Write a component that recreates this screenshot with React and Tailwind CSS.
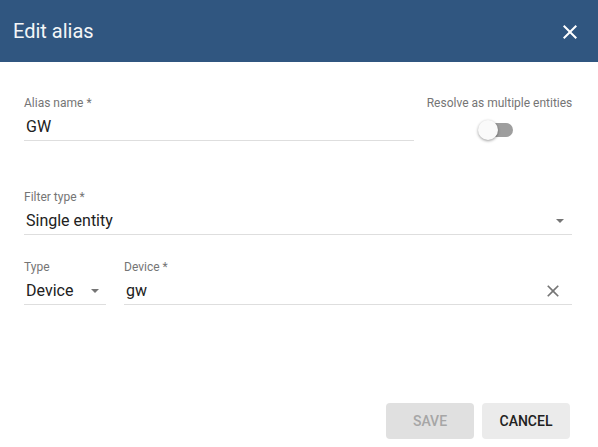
import React from "react";

const font = { fontFamily: "Roboto, 'Liberation Sans', sans-serif" };

function Arrow() {
  return (
    <span className="block w-0 h-0 border-l-[4px] border-r-[4px] border-t-[4px] border-l-transparent border-r-transparent border-t-[#757575]" />
  );
}

function Field({ label, value, right, className = "" }) {
  return (
    <div className={"flex flex-col " + className}>
      <div className="text-[12px] leading-[14px] h-[14px] text-[#757575] whitespace-nowrap">{label}</div>
      <div className="mt-[7px] flex items-center h-[20px] border-b border-[#dedede] box-content pb-[3px]">
        <div className="flex-1 pl-[2px] text-[16px] leading-[20px] text-[#212121] whitespace-nowrap">{value}</div>
        {right}
      </div>
    </div>
  );
}

export default function App() {
  return (
    <div className="w-[598px] h-[447px] bg-white flex flex-col overflow-hidden" style={font}>
      <div className="h-[62px] bg-[#305680] flex items-center justify-between pl-[13px] pr-[16px] shrink-0">
        <div className="text-[20px] leading-[24px] text-[#f4f6f8]">Edit alias</div>
        <svg width="24" height="24" viewBox="0 0 24 24" className="mt-[1px]">
          <path d="M19 6.41 17.59 5 12 10.59 6.41 5 5 6.41 10.59 12 5 17.59 6.41 19 12 13.41 17.59 19 19 17.59 13.41 12z" fill="#ffffff" />
        </svg>
      </div>

      <div className="flex-1 flex flex-col pl-6 pr-[26px]">
        <div className="mt-[34px] flex">
          <Field className="w-[391px]" label="Alias name *" value="GW" />
          <div className="ml-[13px] w-[145px] flex flex-col items-center">
            <div className="text-[12px] leading-[14px] text-[#757575] whitespace-nowrap">Resolve as multiple entities</div>
            <div className="mt-[10px] relative w-[36px] h-[20px] flex items-center -ml-[7px]">
              <div className="w-[34px] h-[14px] rounded-full bg-[#9e9e9e] ml-[1px]" />
              <div className="absolute left-0 top-0 w-[20px] h-[20px] rounded-full bg-[#fafafa] shadow-[0_1px_3px_rgba(0,0,0,0.4)]" />
            </div>
          </div>
        </div>

        <Field className="mt-[49px]" label="Filter type *" value="Single entity" right={<div className="mr-[8px]"><Arrow /></div>} />

        <div className="mt-[25px] flex">
          <Field className="w-[82px]" label="Type" value="Device" right={<div className="mr-[7px]"><Arrow /></div>} />
          <Field
            className="ml-[18px] flex-1"
            label="Device *"
            value="gw"
            right={
              <svg width="20" height="20" viewBox="0 0 24 24" className="mr-[9px]">
                <path d="M19 6.41 17.59 5 12 10.59 6.41 5 5 6.41 10.59 12 5 17.59 6.41 19 12 13.41 17.59 19 19 17.59 13.41 12z" fill="#757575" />
              </svg>
            }
          />
        </div>
      </div>

      <div className="flex justify-end gap-2 pr-[28px] pb-[8px]">
        <div className="w-[88px] h-[36px] rounded-[4px] bg-[#e0e0e0] flex items-center justify-center text-[14px] font-medium text-[#a6a6a6] uppercase">Save</div>
        <div className="w-[88px] h-[36px] rounded-[4px] bg-[#ebebeb] flex items-center justify-center text-[14px] font-medium text-[#212121] uppercase">Cancel</div>
      </div>
    </div>
  );
}
